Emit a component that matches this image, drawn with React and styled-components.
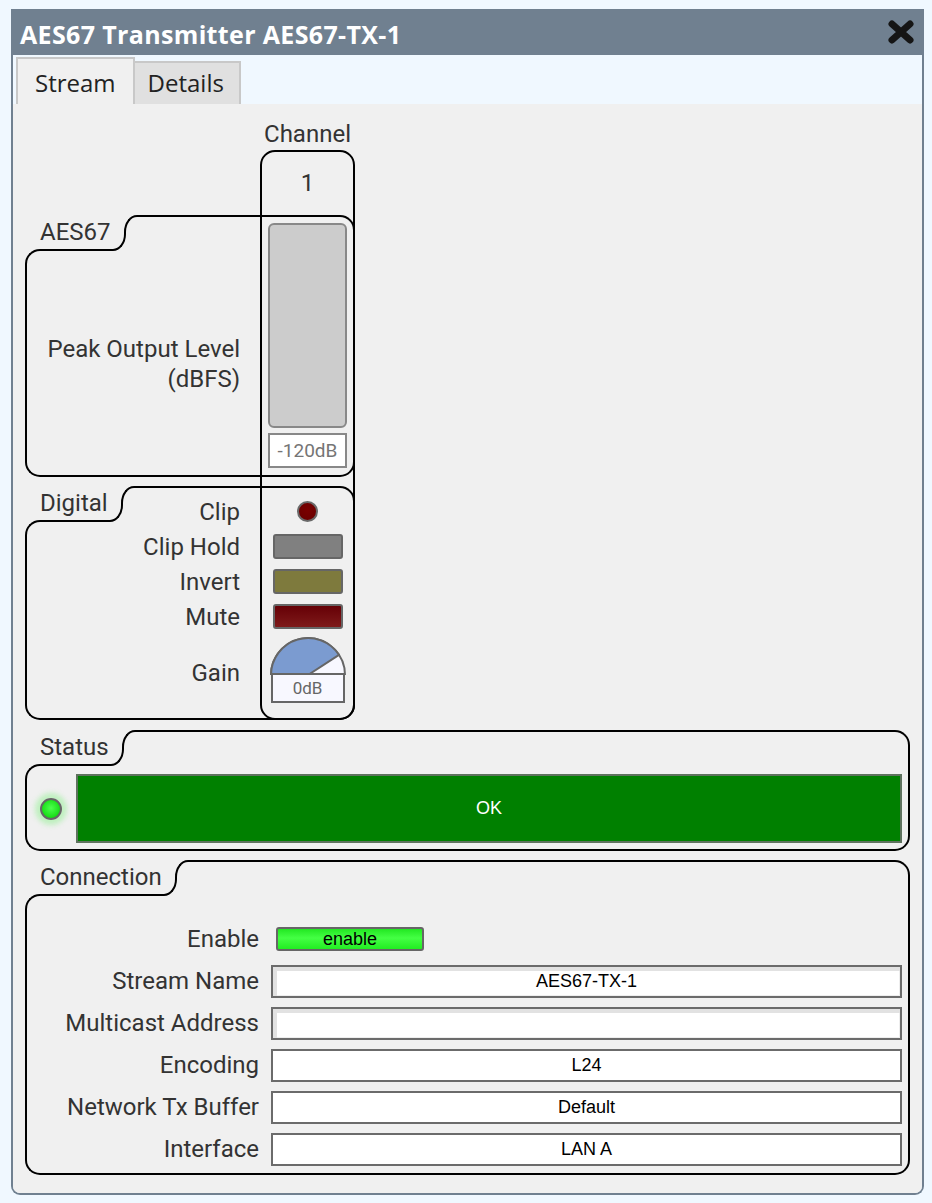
import React from 'react';
import styled, { createGlobalStyle, css } from 'styled-components';

const Global = createGlobalStyle`
  html, body { margin: 0; padding: 0; background: #f0f8ff; }
  body { font-family: Roboto, "Liberation Sans", sans-serif; color: #333; }
  * { box-sizing: border-box; }
`;

const Window = styled.div`
  width: 913px;
  margin: 9px 0 0 11px;
  display: flex;
  flex-direction: column;
`;

const TitleBar = styled.header`
  height: 46px;
  background: #708090;
  display: flex;
  align-items: center;
  justify-content: space-between;
  padding: 0 10px 0 9px;
`;

const Title = styled.h1`
  margin: 5px 0 0 0;
  font: 700 25px/1 "Open Sans", sans-serif;
  letter-spacing: 0.35px;
  color: #fff;
`;

const CloseButton = styled.button`
  border: 0;
  background: none;
  padding: 0;
  width: 26px;
  height: 24px;
  display: flex;
  cursor: pointer;
`;

const Body = styled.div`
  border: 2px solid #708090;
  border-top: none;
  border-radius: 0 0 9px 9px;
  background: #f0f8ff;
  overflow: hidden;
  display: flex;
  flex-direction: column;
`;

const TabBar = styled.nav`
  height: 49px;
  display: flex;
  align-items: flex-end;
  padding-left: 3px;
`;

const Tab = styled.div`
  display: flex;
  align-items: flex-end;
  padding-bottom: 9px;
  border: 2px solid #c8c8c8;
  border-bottom: none;
  font: 400 24px/1 "Open Sans", sans-serif;
  color: #222;
  ${p => p.$active ? css`
    height: 47px;
    background: #f0f0f0;
    padding-left: 17px;
    padding-right: 17px;
  ` : css`
    height: 43px;
    background: #e0e0e0;
    border-left: none;
    padding-left: 13px;
    padding-right: 15px;
  `}
`;

const Panel = styled.main`
  background: #f0f0f0;
  padding: 14px 12px 18px;
  display: flex;
  flex-direction: column;
`;

const TopGrid = styled.div`
  display: grid;
  grid-template-columns: 235px 95px;
  grid-template-rows: 32px 65px auto auto;
  width: 330px;
`;

const ChannelHead = styled.div`
  grid-row: 1;
  grid-column: 2;
  text-align: center;
  font-size: 24px;
  line-height: 32px;
  white-space: nowrap;
`;

const ChannelNumber = styled.div`
  grid-row: 2;
  grid-column: 2;
  display: flex;
  align-items: center;
  justify-content: center;
  font-size: 24px;
`;

const ChannelFrame = styled.div`
  grid-row: 2 / 5;
  grid-column: 2;
  border: 2px solid #000;
  border-radius: 15px;
  z-index: 2;
  pointer-events: none;
`;

/* ---------- group with a tab-shaped outline ---------- */
const line = '2px solid #000';

const GroupBox = styled.section`
  display: grid;
  grid-template-columns: max-content 28px 1fr;
  grid-template-rows: 36px 1fr;
  ${p => p.$row && css`
    grid-row: ${p.$row};
    grid-column: 1 / -1;
  `}
  margin-top: ${p => p.$gap || 0}px;
`;

const GroupLabel = styled.div`
  grid-area: 1 / 1 / 2 / 2;
  padding: 0 0 1px 15px;
  font-size: 24px;
  line-height: 35px;
  color: #333;
`;

const Notch = styled.div`
  grid-area: 1 / 2 / 2 / 3;
  display: flex;
  flex-direction: column;
`;

const NotchTop = styled.div`
  flex: 1;
  align-self: flex-end;
  width: 15px;
  border-top: ${line};
  border-left: ${line};
  border-top-left-radius: 13px 17px;
`;

const NotchBottom = styled.div`
  flex: 1;
  align-self: flex-start;
  width: 15px;
  border-bottom: ${line};
  border-right: ${line};
  border-bottom-right-radius: 13px 17px;
`;

const FrameLeft = styled.div`
  grid-area: 2 / 1 / 3 / 2;
  margin-top: -2px;
  border-top: ${line};
  border-left: ${line};
  border-bottom: ${line};
  border-radius: 15px 0 0 15px;
`;

const FrameMid = styled.div`
  grid-area: 2 / 2 / 3 / 3;
  border-bottom: ${line};
`;

const FrameRight = styled.div`
  grid-area: 1 / 3 / 3 / 4;
  border: ${line};
  border-left: none;
  border-radius: 0 15px 15px 0;
`;

const GroupContent = styled.div`
  grid-area: 1 / 1 / 3 / 4;
  z-index: 1;
`;

function Group({ label, row, gap, children }) {
  return (
    <GroupBox $row={row} $gap={gap}>
      <GroupLabel>{label}</GroupLabel>
      <Notch><NotchTop /><NotchBottom /></Notch>
      <FrameLeft />
      <FrameMid />
      <FrameRight />
      {children}
    </GroupBox>
  );
}

/* ---------- AES67 ---------- */
const AesContent = styled(GroupContent)`
  display: grid;
  grid-template-columns: 1fr 95px;
`;

const SideLabel = styled.div`
  padding: 36px 20px 0 0;
  display: flex;
  align-items: center;
  justify-content: flex-end;
  text-align: right;
  font-size: 24px;
  line-height: 30px;
`;

const MeterColumn = styled.div`
  padding: 8px 0 9px;
  display: flex;
  flex-direction: column;
  align-items: center;
  gap: 5px;
`;

const Meter = styled.div`
  width: 79px;
  height: 205px;
  background: #cccccc;
  border: 2px solid #888;
  border-radius: 6px;
`;

const LevelBox = styled.div`
  width: 79px;
  height: 35px;
  background: #fff;
  border: 2px solid #888;
  display: flex;
  align-items: center;
  justify-content: center;
  font-size: 19px;
  color: #757575;
`;

/* ---------- Digital ---------- */
const DigitalContent = styled(GroupContent)`
  display: grid;
  grid-template-columns: 1fr 95px;
  grid-template-rows: repeat(4, 35px) 70px;
  padding: 8px 0 16px;
  align-items: center;
`;

const RowLabel = styled.div`
  padding-right: 20px;
  text-align: right;
  font-size: 24px;
  ${p => p.$low && css`padding-top: 8px;`}
`;

const Cell = styled.div`
  display: flex;
  flex-direction: column;
  align-items: center;
  justify-content: center;
`;

const ClipLed = styled.div`
  width: 21px;
  height: 21px;
  border-radius: 50%;
  border: 2px solid #6a6a6a;
  background: radial-gradient(circle at 50% 40%, #7a0000, #680000);
`;

const Toggle = styled.div`
  width: 70px;
  height: 25px;
  border: 2px solid #666;
  border-radius: 3px;
  background: ${p => p.$color};
`;

const GainBox = styled.div`
  width: 74px;
  height: 30px;
  margin-top: -2px;
  border: 2px solid #666;
  background: #f8f8ff;
  display: flex;
  align-items: center;
  justify-content: center;
  font-size: 17px;
  color: #666;
`;

/* ---------- Status ---------- */
const StatusContent = styled(GroupContent)`
  display: flex;
  align-items: center;
  gap: 14px;
  padding: 44px 8px 8px 15px;
`;

const StatusLed = styled.div`
  width: 22px;
  height: 22px;
  flex: none;
  border-radius: 50%;
  border: 2px solid #666;
  background: radial-gradient(circle at 50% 45%, #4dff4d, #00d000);
  box-shadow: 0 0 5px 5px rgba(100, 240, 100, 0.35);
`;

const StatusBar = styled.div`
  flex: 1;
  height: 69px;
  background: #008000;
  border: 2px solid #5e725e;
  display: flex;
  align-items: center;
  justify-content: center;
  font: 18px "Liberation Sans", Arial, sans-serif;
  color: #fff;
`;

/* ---------- Connection ---------- */
const ConnContent = styled(GroupContent)`
  display: grid;
  grid-template-columns: 234px 1fr;
  grid-auto-rows: 42px;
  column-gap: 12px;
  align-items: center;
  padding: 58px 8px 5px 0;
`;

const FieldLabel = styled.div`
  text-align: right;
  font-size: 24px;
  white-space: nowrap;
`;

const Field = styled.div`
  height: 33px;
  border: 2px solid #6b6b6b;
  background: #fff;
  display: flex;
  align-items: center;
  justify-content: center;
  font: 18px "Liberation Sans", Arial, sans-serif;
  color: #000;
  ${p => p.$inset && css`
    box-shadow: inset 4px 4px 0 #e2e2e2, inset -1px -1px 0 #eeeeee;
  `}
`;

const EnableButton = styled.div`
  justify-self: start;
  margin-left: 5px;
  width: 148px;
  height: 24px;
  border: 2px solid #666;
  border-radius: 3px;
  background: linear-gradient(to bottom, #22e822, #44ff44 45%, #22ee22);
  display: flex;
  align-items: center;
  justify-content: center;
  font: 18px "Liberation Sans", Arial, sans-serif;
  color: #000;
`;

function CloseIcon() {
  return (
    <svg width="26" height="24" viewBox="0 0 26 24">
      <path d="M4 4 L22 20 M22 4 L4 20" stroke="#151515" strokeWidth="7" strokeLinecap="round" />
    </svg>
  );
}

function GainKnob() {
  return (
    <svg width="78" height="40" viewBox="0 0 78 40" style={{ display: 'block' }}>
      <path d="M2 40 A37 37 0 0 1 76 40 Z" fill="#f8f8ff" stroke="#666" strokeWidth="2" />
      <path d="M2 40 A37 37 0 0 1 70 19.9 L39 40 Z" fill="#7b9bd0" stroke="#666" strokeWidth="2" strokeLinejoin="round" />
    </svg>
  );
}

const connectionRows = [
  { label: 'Stream Name', value: 'AES67-TX-1', inset: true },
  { label: 'Multicast Address', value: '', inset: true },
  { label: 'Encoding', value: 'L24' },
  { label: 'Network Tx Buffer', value: 'Default' },
  { label: 'Interface', value: 'LAN A' },
];

export default function App() {
  return (
    <>
      <Global />
      <Window>
        <TitleBar>
          <Title>AES67 Transmitter AES67-TX-1</Title>
          <CloseButton aria-label="Close"><CloseIcon /></CloseButton>
        </TitleBar>
        <Body>
          <TabBar>
            <Tab $active>Stream</Tab>
            <Tab>Details</Tab>
          </TabBar>
          <Panel>
            <TopGrid>
              <ChannelHead>Channel</ChannelHead>
              <ChannelNumber>1</ChannelNumber>
              <ChannelFrame />
              <Group label="AES67" row={3}>
                <AesContent>
                  <SideLabel>Peak Output Level<br />(dBFS)</SideLabel>
                  <MeterColumn>
                    <Meter />
                    <LevelBox>-120dB</LevelBox>
                  </MeterColumn>
                </AesContent>
              </Group>
              <Group label="Digital" row={4} gap={9}>
                <DigitalContent>
                  <RowLabel>Clip</RowLabel>
                  <Cell><ClipLed /></Cell>
                  <RowLabel>Clip Hold</RowLabel>
                  <Cell><Toggle $color="#808080" /></Cell>
                  <RowLabel>Invert</RowLabel>
                  <Cell><Toggle $color="#7e7a3d" /></Cell>
                  <RowLabel>Mute</RowLabel>
                  <Cell><Toggle $color="linear-gradient(to bottom, #660006, #7e1a1a)" /></Cell>
                  <RowLabel $low>Gain</RowLabel>
                  <Cell>
                    <GainKnob />
                    <GainBox>0dB</GainBox>
                  </Cell>
                </DigitalContent>
              </Group>
            </TopGrid>
            <Group label="Status" gap={10}>
              <StatusContent>
                <StatusLed />
                <StatusBar>OK</StatusBar>
              </StatusContent>
            </Group>
            <Group label="Connection" gap={9}>
              <ConnContent>
                <FieldLabel>Enable</FieldLabel>
                <EnableButton>enable</EnableButton>
                {connectionRows.map(r => (
                  <React.Fragment key={r.label}>
                    <FieldLabel>{r.label}</FieldLabel>
                    <Field $inset={r.inset}>{r.value}</Field>
                  </React.Fragment>
                ))}
              </ConnContent>
            </Group>
          </Panel>
        </Body>
      </Window>
    </>
  );
}
